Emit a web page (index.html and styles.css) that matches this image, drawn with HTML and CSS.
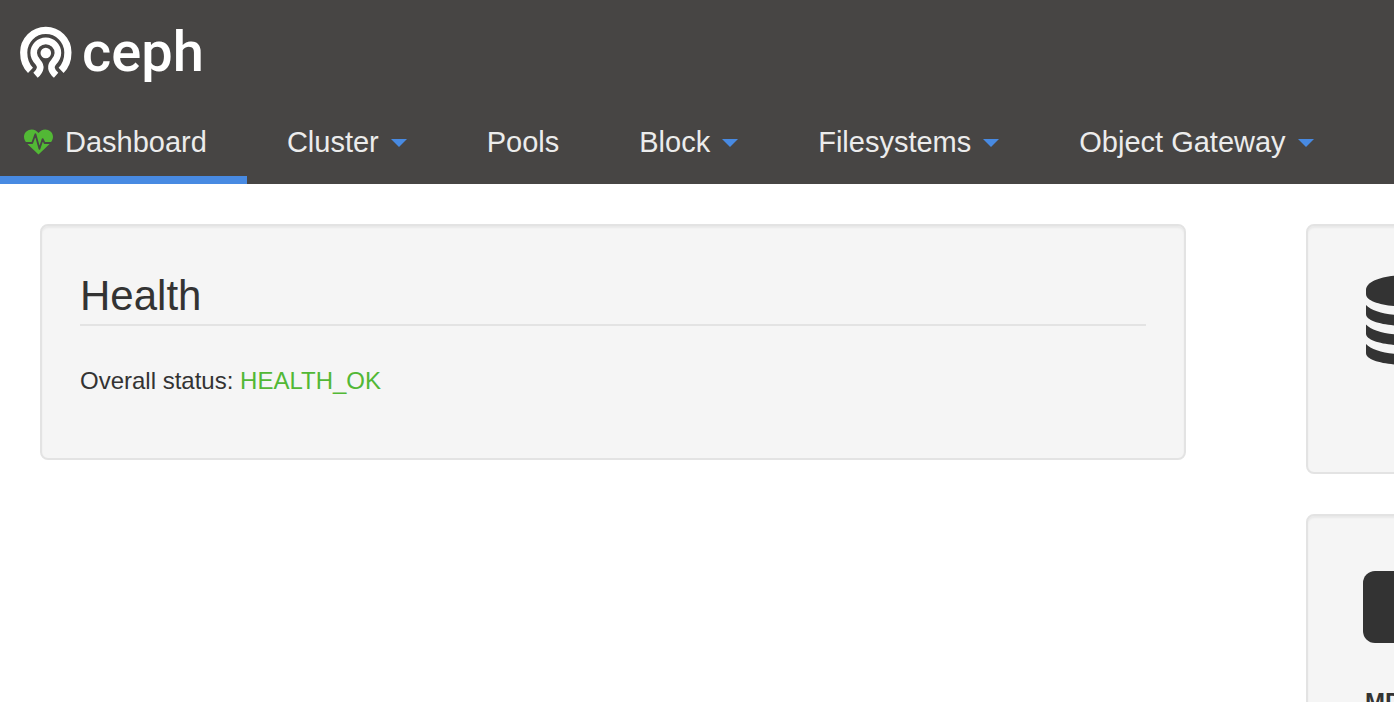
FILE: index.html
```html
<!DOCTYPE html>
<html lang="en">
<head>
<meta charset="utf-8">
<title>Ceph Dashboard</title>
<link rel="stylesheet" href="styles.css">
</head>
<body>
<header class="header">
  <a class="brand" href="#">
    <svg class="brand-mark" viewBox="0 0 52 52" aria-hidden="true">
      <g fill="none" stroke="#fff">
        <path stroke-width="7.200" d="M10.500 44.300 C6 40 3.700 33.500 3.700 26.500 A22.100 22.100 0 0 1 47.900 26.500 C47.900 33.500 45.600 40 41.100 44.300"/>
        <path stroke-width="6.600" d="M15.500 49.300 C21 44.500 21.500 40 18 36.300 C15 33 13.700 30.500 13.700 27 A12.100 12.100 0 0 1 37.900 27 C37.900 30.500 36.600 33 33.600 36.300 C30.100 40 30.600 44.500 36.100 49.300"/>
      </g>
      <circle cx="25.800" cy="27" r="5.300" fill="#fff"/>
    </svg>
    <span class="brand-name">ceph</span>
  </a>
  <nav class="nav">
    <a class="nav-item nav-item-active" href="#">
      <svg class="heart" viewBox="0 0 30 26" aria-hidden="true">
        <path fill="#52b835" d="M15 26 L3.500 15 C-4 7 2 0 8 0 C11 0 13.500 1.800 15 3.800 C16.500 1.800 19 0 22 0 C28 0 34 7 26.500 15 Z"/>
        <path fill="none" stroke="#474544" stroke-width="1.900" stroke-linejoin="round" d="M1 14 H8.500 L11.800 5 L16 20 L19.300 10 L21.200 14 H29"/>
      </svg>
      Dashboard
    </a>
    <a class="nav-item" href="#">Cluster <span class="caret"></span></a>
    <a class="nav-item" href="#">Pools</a>
    <a class="nav-item" href="#">Block <span class="caret"></span></a>
    <a class="nav-item" href="#">Filesystems <span class="caret"></span></a>
    <a class="nav-item" href="#">Object Gateway <span class="caret"></span></a>
  </nav>
</header>
<main class="content">
  <section class="card health">
    <h1 class="title">Health</h1>
    <p class="status">Overall status: <span class="status-ok">HEALTH_OK</span></p>
  </section>
  <aside class="side">
    <section class="card tile tile-first">
      <svg class="database" viewBox="0 0 84 90" fill="#333" aria-hidden="true">
        <path d="M0 15 C0 -5 84 -5 84 15 V19 C84 36 0 36 0 19 Z"/>
        <path id="disk" d="M0 30 C12 44 72 44 84 30 V39 C84 55 0 55 0 39 Z"/>
        <use href="#disk" y="19.500"/>
        <use href="#disk" y="39"/>
      </svg>
    </section>
    <section class="card tile tile-second">
      <svg class="server" viewBox="0 0 96 72" aria-hidden="true">
        <rect width="96" height="72" rx="12" fill="#333"/>
      </svg>
      <h2 class="tile-name">MDS</h2>
    </section>
  </aside>
</main>
</body>
</html>
```

FILE: styles.css
```css
* {
  box-sizing: border-box;
}

body {
  margin: 0;
  background: #fff;
  color: #333;
  font-family: "Liberation Sans", Arial, sans-serif;
  font-size: 24px;
  line-height: 34px;
}

.header {
  background: #474544;
}

.brand {
  display: flex;
  align-items: center;
  gap: 10px;
  height: 104px;
  padding: 0 20px;
  color: #fff;
  text-decoration: none;
}

.brand-mark {
  width: 52px;
  height: 52px;
}

.brand-name {
  font-family: Roboto, sans-serif;
  font-size: 56px;
  font-weight: 500;
  line-height: 64px;
}

.nav {
  display: flex;
}

.nav-item {
  display: flex;
  align-items: center;
  gap: 12px;
  padding: 18px 40px 14px;
  border-bottom: 8px solid transparent;
  color: #ececec;
  font-size: 29px;
  line-height: 40px;
  text-decoration: none;
  white-space: nowrap;
}

.nav-item-active {
  padding-left: 24px;
  border-bottom-color: #488ae2;
}

.heart {
  width: 29px;
  height: 26px;
}

.caret {
  margin-top: 2px;
  border: 8px solid transparent;
  border-top-color: #488ae2;
  border-bottom: 0;
}

.content {
  display: grid;
  grid-template-columns: minmax(0, 1fr) 88px;
  align-items: start;
  gap: 120px;
  padding: 40px 0 40px 40px;
  overflow-x: clip;
}

.card {
  border: 2px solid #e3e3e3;
  border-radius: 8px;
  background: #f5f5f5;
  box-shadow: inset 0 2px 2px rgba(0, 0, 0, 0.05);
}

.health {
  padding: 38px 38px 60px;
}

.title {
  margin: 0 0 38px;
  padding: 9px 0 5px;
  border-bottom: 2px solid #e3e3e3;
  font-size: 42px;
  font-weight: 400;
  line-height: 46px;
}

.status {
  margin: 0;
}

.status-ok {
  color: #52b835;
}

.side {
  display: grid;
  gap: 40px;
}

.tile {
  width: 280px;
  padding: 55px 55px 50px;
}

.tile-first {
  padding: 49px 58px 107px;
}

.tile svg {
  display: block;
}

.database {
  width: 84px;
  height: 90px;
}

.server {
  width: 96px;
  height: 72px;
}

.tile-name {
  margin: 42px 0 0 2px;
  font-size: 24px;
  font-weight: 700;
}
```
